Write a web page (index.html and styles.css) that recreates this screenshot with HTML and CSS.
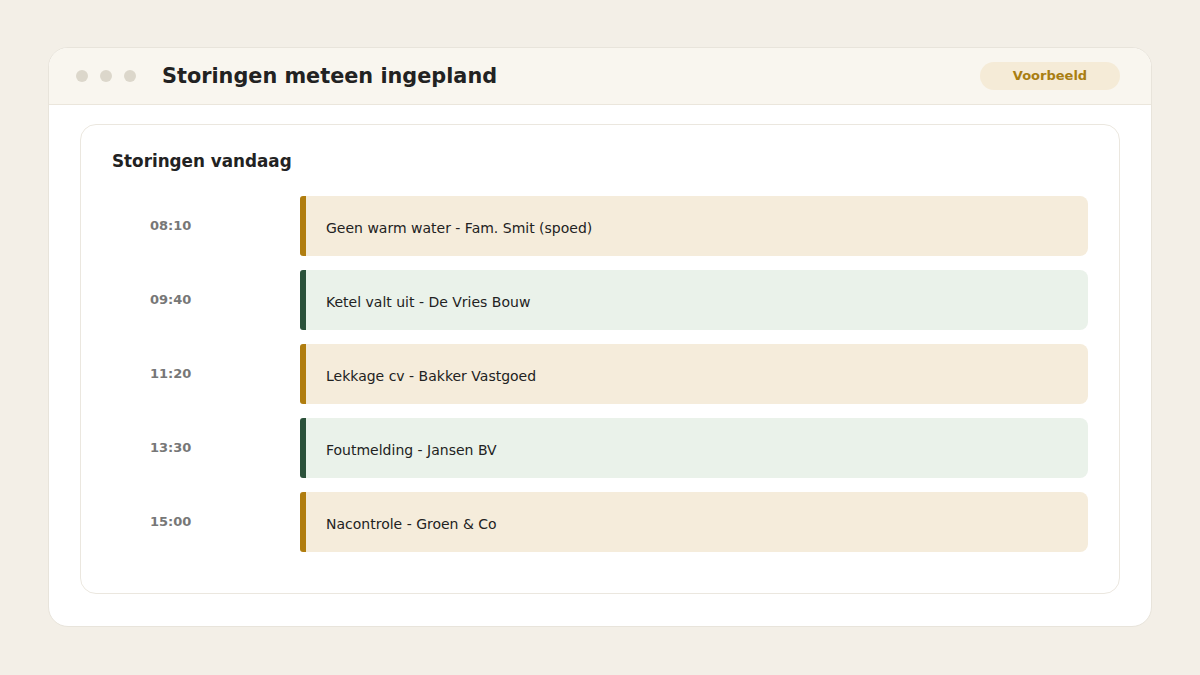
FILE: index.html
```html
<!DOCTYPE html>
<html lang="nl">
<head>
  <meta charset="UTF-8">
  <title>Storingen meteen ingepland</title>
  <link rel="stylesheet" href="styles.css">
</head>
<body>

  <div class="window">
    <!-- Title bar -->
    <header class="titlebar">
      <div class="dots">
        <span class="dot"></span>
        <span class="dot"></span>
        <span class="dot"></span>
      </div>
      <h1>Storingen meteen ingepland</h1>
      <span class="badge">Voorbeeld</span>
    </header>

    <div class="content">
      <section class="card">
        <h2>Storingen vandaag</h2>

        <ul class="schedule">
          <li class="row">
            <span class="time">08:10</span>
            <div class="event gold">Geen warm water - Fam. Smit (spoed)</div>
          </li>
          <li class="row">
            <span class="time">09:40</span>
            <div class="event green">Ketel valt uit - De Vries Bouw</div>
          </li>
          <li class="row">
            <span class="time">11:20</span>
            <div class="event gold">Lekkage cv - Bakker Vastgoed</div>
          </li>
          <li class="row">
            <span class="time">13:30</span>
            <div class="event green">Foutmelding - Jansen BV</div>
          </li>
          <li class="row">
            <span class="time">15:00</span>
            <div class="event gold">Nacontrole - Groen &amp; Co</div>
          </li>
        </ul>
      </section>
    </div>
  </div>

</body>
</html>
```

FILE: styles.css
```css
* {
  box-sizing: border-box;
}
body {
  margin: 0;
  padding: 47px 48px;
  background: #f3efe7;
  font-family: 'DejaVu Sans', Verdana, sans-serif;
  color: #222;
}
.window {
  background: #fff;
  border: 1px solid #e8e4db;
  border-radius: 20px;
  overflow: hidden;
}
.titlebar {
  display: flex;
  align-items: center;
  height: 57px;
  padding: 0 31px 0 27px;
  background: #f9f6ef;
  border-bottom: 1px solid #ebe6dc;
}
.dots {
  display: flex;
  gap: 12px;
}
.dot {
  width: 12px;
  height: 12px;
  border-radius: 50%;
  background: #dcd7cb;
}
h1 {
  flex: 1;
  margin: 0 0 0 26px;
  font-size: 20.8px;
  font-weight: bold;
  color: #222;
}
.badge {
  width: 140px;
  height: 28px;
  line-height: 28px;
  border-radius: 14px;
  background: #f5ebd7;
  color: #a97e12;
  font-size: 13px;
  font-weight: bold;
  text-align: center;
}
.content {
  padding: 19px 31px 32px;
}
.card {
  border: 1px solid #ebe7df;
  border-radius: 16px;
  padding: 26px 31px 41px;
}
h2 {
  margin: 0 0 25px;
  font-size: 16.8px;
  line-height: 20px;
  font-weight: bold;
  color: #222;
}
.schedule {
  list-style: none;
  margin: 0;
  padding: 0;
  display: flex;
  flex-direction: column;
  gap: 14px;
}
.row {
  display: grid;
  grid-template-columns: 188px 1fr;
  align-items: center;
  height: 60px;
}
.time {
  padding: 0 0 2px 38px;
  font-size: 13px;
  font-weight: bold;
  color: #777;
}
.event {
  height: 60px;
  display: flex;
  align-items: center;
  padding: 3px 0 0 20px;
  border-left: 6px solid;
  border-radius: 3px 8px 8px 3px;
  font-size: 14px;
  color: #222;
}
.event.gold {
  background: #f5ecdb;
  border-left-color: #b07d0f;
}
.event.green {
  background: #eaf2ea;
  border-left-color: #2b513a;
}
```
